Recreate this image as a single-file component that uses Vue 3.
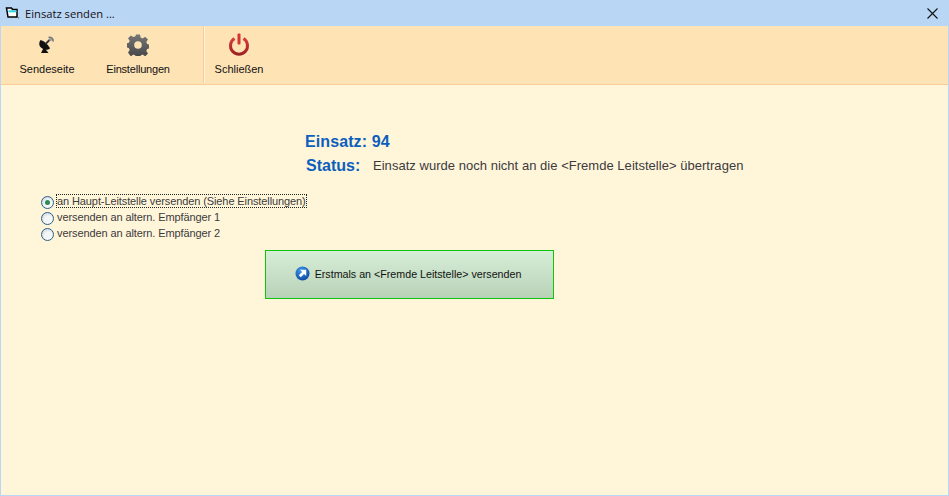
<template>
  <div class="window">
    <header class="titlebar">
      <svg class="app-icon" width="16" height="16" viewBox="0 0 16 16">
        <path d="M1.500 3h5l1 1.500h4.500v7.500H3z" fill="#fff" stroke="#000" stroke-width="1.500"/>
        <path d="M3.500 5.300h8v2h-8z" fill="#2fd3e0"/>
        <path d="M12.500 12l2 .5-1 1.500z" fill="#777"/>
      </svg>
      <span class="title">Einsatz senden ...</span>
      <svg class="close" width="11" height="11" viewBox="0 0 11 11">
        <path d="M0.500 0.500l10 10M10.500 0.500l-10 10" stroke="#111" stroke-width="1.100" fill="none"/>
      </svg>
    </header>

    <nav class="toolbar">
      <div class="tool tool-send">
        <svg width="20" height="20" viewBox="0 0 20 20">
          <path d="M3.500 5c3 .5 8.500 5.500 9.500 8.500-3 2.500-8 1-10-2-1.300-2-.8-4.500.5-6.500z" fill="#111"/>
          <path d="M7 12l-3 6h7.500l-3.500-4.500z" fill="#111"/>
          <path d="M8.500 9l4.500-4.500" stroke="#333" stroke-width="1.800"/>
          <path d="M11.500 2.500a3.500 3.500 0 0 1 4.500 4" fill="none" stroke="#777" stroke-width="1.700"/>
          <circle cx="13.500" cy="4.500" r="1.500" fill="#999"/>
        </svg>
        <span>Sendeseite</span>
      </div>
      <div class="tool tool-settings">
        <svg width="22" height="22" viewBox="0 0 22 22">
          <defs>
            <linearGradient id="gear" x1="0" y1="0" x2="0" y2="1">
              <stop offset="0" stop-color="#777"/>
              <stop offset="1" stop-color="#444"/>
            </linearGradient>
          </defs>
          <path fill="url(#gear)" fill-rule="evenodd" d="M9 0.500h4l.6 3 2 .9 2.600-1.700 2.800 2.800-1.700 2.600.9 2 2.800.6v3.600l-2.800.6-.9 2 1.700 2.600-2.800 2.800-2.600-1.700-2 .9-.6 3H9l-.6-3-2-.9-2.600 1.700L1 18.600l1.700-2.600-.9-2-2.800-.6V9.400l2.800-.6.9-2L1 4.200 3.800 1.400l2.600 1.700 2-.9zM11 7.200a3.800 3.800 0 1 0 0 7.600 3.800 3.800 0 0 0 0-7.600z"/>
        </svg>
        <span class="tight">Einstellungen</span>
      </div>
      <div class="divider"></div>
      <div class="tool tool-close">
        <svg width="24" height="24" viewBox="0 0 24 24">
          <defs>
            <linearGradient id="power" x1="0" y1="0" x2="0" y2="1">
              <stop offset="0" stop-color="#d83a3a"/>
              <stop offset="1" stop-color="#9c2222"/>
            </linearGradient>
          </defs>
          <path d="M7.500 6.500a8.500 8.500 0 1 0 9 0" fill="none" stroke="url(#power)" stroke-width="3"/>
          <rect x="10.500" y="1.500" width="3" height="11" rx="1" fill="#d63434"/>
        </svg>
        <span>Schließen</span>
      </div>
    </nav>

    <main class="content">
      <section class="summary">
        <div class="line-einsatz">Einsatz: 94</div>
        <div class="line-status">
          <span class="status-label">Status:</span>
          <span class="status-text">Einsatz wurde noch nicht an die &lt;Fremde Leitstelle&gt; übertragen</span>
        </div>
      </section>

      <section class="options">
        <label v-for="(o, i) in options" :key="o" class="option">
          <span class="radio" :class="{ on: i === 0 }"></span>
          <span class="option-text" :class="{ focus: i === 0 }">{{ o }}</span>
        </label>
      </section>

      <button class="send" type="button">
        <svg width="15" height="15" viewBox="0 0 15 15">
          <defs>
            <radialGradient id="ball" cx="0.400" cy="0.300" r="0.800">
              <stop offset="0" stop-color="#3c9bea"/>
              <stop offset="1" stop-color="#0b3f9c"/>
            </radialGradient>
          </defs>
          <circle cx="7.500" cy="7.500" r="7" fill="url(#ball)"/>
          <path d="M5 3.800h6.200V10L9 7.900l-3.300 3.300-1.900-1.900L7.100 6z" fill="#fff"/>
        </svg>
        <span>Erstmals an &lt;Fremde Leitstelle&gt; versenden</span>
      </button>
    </main>
  </div>
</template>

<script setup>
const options = [
  'an Haupt-Leitstelle versenden (Siehe Einstellungen)',
  'versenden an altern. Empfänger 1',
  'versenden an altern. Empfänger 2'
]
</script>

<style>
html, body { margin: 0; padding: 0; }
</style>

<style scoped>
.window {
  width: 949px;
  height: 496px;
  box-sizing: border-box;
  display: flex;
  flex-direction: column;
  background: #b9d7f5;
  padding: 0 1px 1px;
  font-family: "Liberation Sans", Arial, sans-serif;
  overflow: hidden;
}
.titlebar {
  height: 26px;
  flex: none;
  display: flex;
  align-items: center;
  padding-left: 4px;
  padding-right: 10px;
}
.app-icon { margin-right: 4px; }
.title {
  font-family: "Open Sans", "Noto Sans", sans-serif;
  font-size: 11.200px;
  color: #1a0f14;
}
.close { margin-left: auto; }
.toolbar {
  height: 59px;
  flex: none;
  box-sizing: border-box;
  display: flex;
  background: #fee3b5;
  border-bottom: 1px solid #fbcb98;
  font-size: 11px;
  color: #111;
}
.tool {
  display: flex;
  flex-direction: column;
  align-items: center;
}
.tool svg { flex: none; }
.tool span { white-space: nowrap; }
.tight { letter-spacing: -0.2px; }
.tool-send { width: 54px; margin-left: 19px; padding-top: 9px; }
.tool-send span { margin-top: 8px; }
.tool-settings { width: 64px; margin-left: 32px; padding-top: 8px; }
.tool-settings span { margin-top: 7px; }
.divider {
  width: 2px;
  height: 57px;
  margin-left: 33px;
  background: linear-gradient(90deg, #f6cda0 0 1px, #fff3dc 1px);
}
.tool-close { width: 48px; margin-left: 10px; padding-top: 6px; }
.tool-close span { margin-top: 7px; }
.content {
  flex: 1;
  background: #fff6da;
  display: flex;
  flex-direction: column;
  align-items: flex-start;
}
.summary { margin: 47px 0 0 304px; }
.line-einsatz {
  font-size: 16px;
  line-height: 20px;
  font-weight: 700;
  letter-spacing: 0.1px;
  color: #0d5fbd;
}
.line-status {
  display: flex;
  align-items: center;
  height: 24px;
  margin-top: 2px;
}
.status-label {
  width: 68px;
  padding-left: 1px;
  box-sizing: border-box;
  font-size: 16px;
  font-weight: 700;
  color: #0d5fbd;
}
.status-text { font-size: 13px; letter-spacing: 0.03px; color: #3d3a3d; margin-top: -1px; }
.options {
  margin: 15px 0 0 40px;
  display: flex;
  flex-direction: column;
}
.option {
  display: flex;
  align-items: center;
  height: 16px;
  font-size: 11px;
  letter-spacing: -0.1px;
  color: #3c3a3c;
}
.radio {
  width: 13px;
  height: 13px;
  box-sizing: border-box;
  flex: none;
  border-radius: 50%;
  border: 1px solid #2c5f86;
  background: radial-gradient(circle at 60% 65%, #f4f6f8 0 40%, #c6ccd4 100%);
  margin-right: 2px;
  margin-top: 3px;
  display: flex;
  align-items: center;
  justify-content: center;
}
.radio.on::after {
  content: "";
  width: 5px;
  height: 5px;
  border-radius: 50%;
  background: #2f8a55;
}
.option-text { padding: 0 1px; line-height: 14px; }
.option-text.focus { outline: 1px dotted #222; outline-offset: -1px; }
.send {
  width: 289px;
  height: 49px;
  margin: 9px 0 0 264px;
  box-sizing: border-box;
  padding: 0 3px 2px 0;
  border: 1px solid #0fc40f;
  background: linear-gradient(180deg, #d6eed6 0%, #b8d2b8 100%) padding-box;
  display: flex;
  align-items: center;
  justify-content: center;
  gap: 5px;
  font-family: "Liberation Sans", Arial, sans-serif;
  font-size: 10.700px;
  color: #111;
}
</style>
